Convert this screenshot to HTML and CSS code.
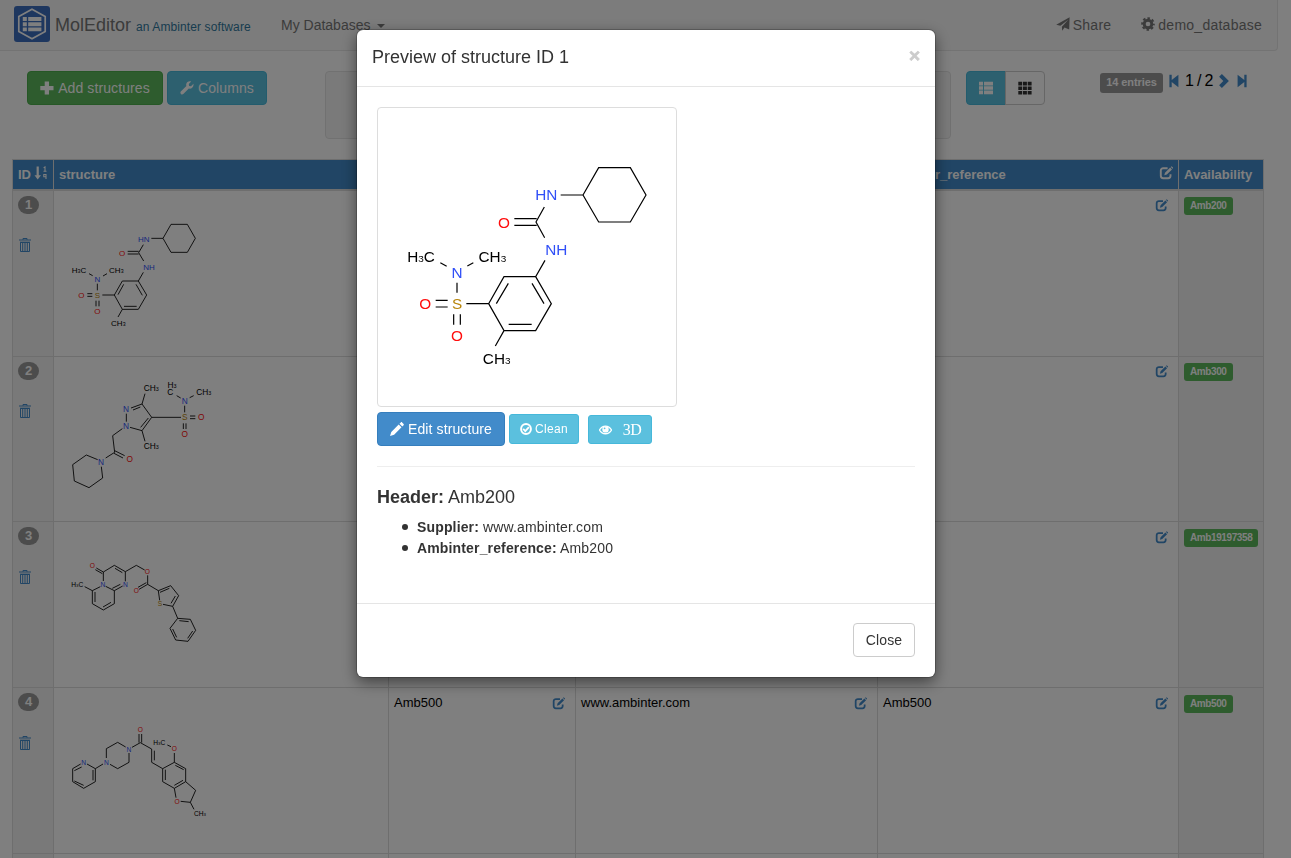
FILE: index.html
```html
<!DOCTYPE html>
<html lang="en">
<head>
<meta charset="utf-8">
<title>MolEditor</title>
<link rel="stylesheet" href="styles.css">
</head>
<body>
<svg class="sprite" aria-hidden="true">
  <symbol id="plus" viewBox="0 0 14 14"><path d="M4.700.500h4.300V5h4.500v4.200H9v4.300H4.700V9.200H.300V5h4.400z"/></symbol>
  <symbol id="wrench" viewBox="0 0 14 14"><path d="M13.500 2.800 11 5.200 9.100 4.900 8.800 3 11.200.600C9-.200 6.600 1 6.200 3.200c-.100.800 0 1.300.200 1.900L.800 10.400c-.600.800-.500 1.800.100 2.500.700.700 1.700.700 2.400.100L8.800 7.600c2.800.600 5.100-1.900 4.700-4.800z"/></symbol>
  <symbol id="plane" viewBox="0 0 14 14"><path d="M13.600.200 13.200 12.600 8.500 10.600 6.200 13.800 5.900 9.700 12.200 2.800 4.400 8.700.200 7.700z"/></symbol>
  <symbol id="cog" viewBox="0 0 14 14"><circle cx="7" cy="7" r="3.800" fill="none" stroke="currentColor" stroke-width="2.900"/><circle cx="7" cy="7" r="5.800" fill="none" stroke="currentColor" stroke-width="2" stroke-dasharray="2.500 2.055" stroke-dashoffset="1.250"/></symbol>
  <symbol id="list" viewBox="0 0 14 14"><path d="M0 .800h4v3.600H0zM5 .800h9v3.600H5zM0 5.200h4v3.600H0zM5 5.200h9v3.600H5zM0 9.600h4v3.600H0zM5 9.600h9v3.600H5z"/></symbol>
  <symbol id="grid" viewBox="0 0 14 14"><path d="M.300.800h3.900v3.600H.300zM5 .800h3.900v3.600H5zM9.700.800h3.900v3.600H9.700zM.300 5.400h3.900V9H.300zM5 5.400h3.900V9H5zM9.700 5.400h3.900V9H9.700zM.300 10h3.900v3.600H.300zM5 10h3.900v3.600H5zM9.700 10h3.900v3.600H9.700z"/></symbol>
  <symbol id="first" viewBox="0 0 10 14"><path d="M.400.700h2.300v5.400L9.400.700v12.600L2.700 7.900v5.400H.400z"/></symbol>
  <symbol id="last" viewBox="0 0 10 14"><path d="M9.600.700H7.300v5.400L.600.700v12.600l6.700-5.400v5.400h2.300z"/></symbol>
  <symbol id="next" viewBox="0 0 10 14"><path d="M2.900 0 9.900 7l-7 7L.100 11.200 4.300 7 .100 2.800z"/></symbol>
  <symbol id="edit" viewBox="0 0 14 14"><path d="M8.600 2.200H4.200C2.800 2.200 1.800 3.200 1.800 4.600v5.200c0 1.400 1 2.400 2.400 2.400h4.900c1.400 0 2.400-1 2.400-2.400V8.200" fill="none" stroke="currentColor" stroke-width="1.900"/><path d="M5.300 9.300 6 6.800 11.200 1.600 13 3.400 7.800 8.600zM11.800 1l.8-.8 1.800 1.800-.8.8z"/></symbol>
  <symbol id="sort" viewBox="0 0 14 14"><path d="M2.600.500h2.200v8.700h2.200L3.700 13.500.500 9.200h2.100z"/><path d="M9.600 1.700 11 1v4.200M9.500 5.200h3M12 13V8.500H9.800v2.200H12" fill="none" stroke="currentColor" stroke-width="1.100"/></symbol>
  <symbol id="trash" viewBox="0 0 12 14"><path d="M0 2h12M4 1.800V.500h4v1.300M1.500 4.500v9h9v-9zM3.700 5v8M6 5v8M8.300 5v8M1 4.200h10" fill="none" stroke="currentColor"/></symbol>
  <symbol id="pencil" viewBox="0 0 14 14"><path d="M0 14 1.300 9.900 8.700 2.500l2.800 2.800-7.400 7.400zM9.500 1.700l1.300-1.300c.4-.4.900-.4 1.300 0l1.500 1.500c.4.400.4.900 0 1.300l-1.300 1.300z"/></symbol>
  <symbol id="check" viewBox="0 0 12 12"><circle cx="6" cy="6" r="4.900" fill="none" stroke="currentColor" stroke-width="2"/><path d="m3.200 5.900 2.100 2.200 3.600-4" fill="none" stroke="currentColor" stroke-width="1.800"/></symbol>
  <symbol id="eye" viewBox="0 0 13 12"><path d="M.500 6C3.500.800 9.500.800 12.500 6 9.500 11 3.500 11 .500 6z" fill="none" stroke="currentColor" stroke-width="1.300"/><circle cx="6.500" cy="5.400" r="3.200"/><circle cx="5.600" cy="4.300" r=".9" fill="#5bc0de"/></symbol>
</svg>

<nav class="navbar">
  <a class="brand">
    <svg class="logo" viewBox="0 0 36 36"><rect width="36" height="36" rx="3" fill="#3d6fbf"/><path d="M18 3.200 31.200 10.500v15L18 32.800 4.800 25.500v-15z" fill="none" stroke="#fff" stroke-width="1.700"/><path d="M8.800 11h4v4h-4zM14.200 11h13.200v4H14.200zM8.800 16.200h4v4h-4zM14.200 16.200h13.200v4H14.200zM8.800 21.400h4v3.800h-4zM14.200 21.400h13.200v3.800H14.200z" fill="#fff"/></svg>
    <span class="brand-name">MolEditor</span><small>an Ambinter software</small>
  </a>
  <a class="nav-link">My Databases <i class="caret"></i></a>
  <div class="nav-right">
    <a class="nav-link spaced"><svg class="ico"><use href="#plane"/></svg>Share</a>
    <a class="nav-link spaced"><svg class="ico"><use href="#cog"/></svg>demo_database</a>
  </div>
</nav>

<div class="toolbar">
  <div class="actions">
    <button class="btn success"><svg class="ico"><use href="#plus"/></svg>Add structures</button>
    <button class="btn info"><svg class="ico"><use href="#wrench"/></svg>Columns</button>
  </div>
  <div class="well"></div>
  <div class="view-toggle">
    <button class="btn info"><svg class="ico"><use href="#list"/></svg></button>
    <button class="btn default"><svg class="ico"><use href="#grid"/></svg></button>
  </div>
  <div class="pager">
    <span class="entries">14 entries</span>
    <svg class="pg"><use href="#first"/></svg><span class="page">1 / 2</span><svg class="pg next"><use href="#next"/></svg><svg class="pg"><use href="#last"/></svg>
  </div>
</div>

<table class="grid">
  <colgroup><col class="c-id"><col class="c-structure"><col class="c-name"><col class="c-supplier"><col class="c-ref"><col class="c-avail"></colgroup>
  <thead><tr>
    <th><div class="cell">ID<svg class="ico"><use href="#sort"/></svg></div></th>
    <th>structure</th>
    <th></th>
    <th></th>
    <th><div class="cell">Ambinter_reference<svg class="ico"><use href="#edit"/></svg></div></th>
    <th>Availability</th>
  </tr></thead>
  <tbody>
    <tr class="raised tall">
      <td class="side"><span class="badge">1</span><svg class="bin"><use href="#trash"/></svg></td>
      <td><svg class="mol" viewBox="177 138 480 450" font-size="24">
        <path d="M489 265 513 223H562L586 265 562 307H513zM454 265H489M430 284 416 308 431 333M416 304H383M416 312H383M430 367 415 393 440 435 415 478H367L343 435 367 393H415M408 403 427 436M371 403 354 434M372 469H410M343 435H307M292 401V421M288 452V469M297 452V469M262 431H277M262 439H277M267 371 278 377M309 378 321 371M367 478 354 501"/>
        <g class="n"><text x="431" y="275">HN</text><text x="447" y="360">NH</text><text x="292" y="396">N</text></g>
        <g class="o"><text x="366" y="317">O</text><text x="244" y="444">O</text><text x="292" y="493">O</text></g><text class="s" x="292" y="444">S</text>
        <text x="237" y="370">H<tspan class="sub">3</tspan>C</text><text x="349" y="370">CH<tspan class="sub">3</tspan></text><text x="355" y="528">CH<tspan class="sub">3</tspan></text>
      </svg></td>
      <td></td>
      <td></td>
      <td><div class="cell end"><svg class="ico"><use href="#edit"/></svg></div></td>
      <td class="side"><span class="label">Amb200</span></td>
    </tr>
    <tr class="raised short">
      <td class="side"><span class="badge">2</span><svg class="bin"><use href="#trash"/></svg></td>
      <td><svg class="mol" viewBox="177 36 480 450" font-size="25">
        <path d="M435 131 426 162 455 202 426 242 435 274M426 162 393 174M421 171 399 180M455 202H543M445 204 422 232M379 191V215M390 232 426 242M367 236 338 257 344 307 317 324M344 302 374 317M342 310 369 324M293 329 259 315 218 344 223 393 267 413 308 384 304 350M554 167V187M550 220V237M558 220V237M570 198H586M570 206H586M530 137 542 144M569 143 581 137"/>
        <g class="n"><text x="378" y="186">N</text><text x="378" y="237">N</text><text x="303" y="344">N</text><text x="554" y="161">N</text></g>
        <g class="o"><text x="389" y="335">O</text><text x="604" y="211">O</text><text x="554" y="261">O</text></g><text class="s" x="554" y="211">S</text>
        <text x="454" y="124">CH<tspan class="sub">3</tspan></text><text x="454" y="298">CH<tspan class="sub">3</tspan></text><text x="611" y="136">CH<tspan class="sub">3</tspan></text><text x="516" y="113">H<tspan class="sub">3</tspan></text><text x="511" y="136">C</text>
      </svg></td>
      <td></td>
      <td></td>
      <td><div class="cell end"><svg class="ico"><use href="#edit"/></svg></div></td>
      <td class="side"><span class="label">Amb300</span></td>
    </tr>
    <tr>
      <td class="side"><span class="badge">3</span><svg class="bin"><use href="#trash"/></svg></td>
      <td><svg class="mol" viewBox="177 21 480 450" font-size="20">
        <path d="M254 200 277 212 301 200M277 212V251L310 270 343 251V212L317 199M285 216V246M309 261 333 247M343 212 368 198M337 205 361 193M310 183V156L343 136 376 155V184M345 145 367 158M310 156 289 144M307 161 286 149M376 155 409 136 434 150M443 166V193L475 212 512 197 536 227 518 259 489 253M443 193 417 208M439 188 414 202M480 217 508 205M526 228 513 250M475 212 479 241M518 259 533 295 571 298 587 331 564 364 527 360 510 325 533 295M538 302 566 305M578 333 563 355M530 352 518 327"/>
        <g class="n"><text x="309" y="201">N</text><text x="376" y="201">N</text></g>
        <g class="o"><text x="277" y="143">O</text><text x="442" y="162">O</text><text x="409" y="220">O</text></g><text class="s" x="480" y="257">S</text>
        <text x="232" y="200">H<tspan class="sub">3</tspan>C</text>
      </svg></td>
      <td></td>
      <td></td>
      <td><div class="cell end"><svg class="ico"><use href="#edit"/></svg></div></td>
      <td class="side"><span class="label">Amb19197358</span></td>
    </tr>
    <tr>
      <td class="side"><span class="badge">4</span><svg class="bin"><use href="#trash"/></svg></td>
      <td><svg class="mol" viewBox="177 24 480 450" font-size="20">
        <path d="M242 237 218 251V290L251 310 286 290V251L261 237M245 246 223 257M223 288 251 301M279 286V255M286 251 309 237M319 219V191L353 172 377 186M387 204V232L353 251 330 238M396 187 421 173 455 192V232L488 251V290L523 310 557 290V251L523 232 488 251M417 173V147M425 173V147M463 197V226M496 254V285M523 301 549 286M526 241 551 254M523 232V204M513 185 502 180M557 290 587 316 571 352 542 349M523 310 528 338M571 352 582 373"/>
        <g class="n"><text x="251" y="239">N</text><text x="319" y="239">N</text><text x="387" y="200">N</text></g>
        <g class="o"><text x="421" y="140">O</text><text x="523" y="199">O</text><text x="531" y="356">O</text></g>
        <text x="478" y="179">H<tspan class="sub">3</tspan>C</text><text x="600" y="393">CH<tspan class="sub">3</tspan></text>
      </svg></td>
      <td><div class="cell">Amb500<svg class="ico"><use href="#edit"/></svg></div></td>
      <td><div class="cell">www.ambinter.com<svg class="ico"><use href="#edit"/></svg></div></td>
      <td><div class="cell">Amb500<svg class="ico"><use href="#edit"/></svg></div></td>
      <td class="side"><span class="label">Amb500</span></td>
    </tr>
    <tr class="partial"><td class="side"></td><td></td><td></td><td></td><td></td><td class="side"></td></tr>
  </tbody>
</table>

<div class="backdrop">
  <section class="modal">
    <header class="modal-head"><h4>Preview of structure ID 1</h4><span class="x">×</span></header>
    <div class="modal-body">
      <div class="frame">
        <svg class="mol large" viewBox="63 24 894 894" font-size="46">
          <path d="M678 285 725 203H820L867 285 820 366H725zM611 285H678M562 321 537 366 563 413M539 356H472M539 376H472M564 481 536 530 583 611 536 692H441L395 611 441 530H536M525 550 561 611M454 550 418 611M455 673H524M395 611H328M300 548V578M290 643V674M310 643V674M236 601H272M236 621H272M250 488 269 499M331 498 349 488M441 692 415 738"/>
          <g class="n"><text x="568" y="301">HN</text><text x="598" y="465">NH</text><text x="300" y="534">N</text></g>
          <g class="o"><text x="441" y="383">O</text><text x="205" y="628">O</text><text x="300" y="722">O</text></g><text class="s" x="300" y="628">S</text>
          <text x="192" y="487">H<tspan class="sub">3</tspan>C</text><text x="406" y="487">CH<tspan class="sub">3</tspan></text><text x="419" y="792">CH<tspan class="sub">3</tspan></text>
        </svg>
      </div>
      <div class="modal-actions">
        <button class="btn primary"><svg class="ico"><use href="#pencil"/></svg>Edit structure</button>
        <button class="btn info small"><svg class="ico"><use href="#check"/></svg>Clean</button>
        <button class="btn info small three-d"><svg class="ico"><use href="#eye"/></svg>3D</button>
      </div>
      <hr>
      <h4><b>Header:</b> Amb200</h4>
      <ul><li><b>Supplier:</b> www.ambinter.com</li><li><b>Ambinter_reference:</b> Amb200</li></ul>
    </div>
    <footer class="modal-foot"><button class="btn default">Close</button></footer>
  </section>
</div>
</body>
</html>
```
FILE: styles.css
```css
* { box-sizing: border-box; }
html, body { height: 858px; overflow: hidden; }
body { margin: 0; background: #fff; color: #333; font: 14px/20px "Liberation Sans", Arial, sans-serif; }
svg { fill: currentColor; flex: none; }
.sprite { position: absolute; width: 0; height: 0; }
.ico { width: 14px; height: 14px; overflow: visible; }

.navbar { display: flex; align-items: center; width: 1278px; height: 51px; padding: 0 15px 2px 14px; background: #f8f8f8; border: 1px solid #e7e7e7; border-width: 0 1px 1px 0; border-radius: 0 0 4px; color: #777; }
.brand { display: flex; align-items: center; width: 267px; font-size: 18px; }
.logo { width: 36px; height: 36px; margin-right: 5px; }
.brand-name { padding-top: 1px; }
.brand small { margin: 6px 0 0 5px; font-size: 12px; letter-spacing: .1px; color: #31789f; }
.nav-link { display: flex; align-items: center; padding-top: 2px; white-space: nowrap; }
.nav-link .ico { margin: -2px 3px 0 0; }
.spaced { letter-spacing: .25px; }
.nav-right { display: flex; gap: 30px; margin-left: auto; }
.caret { margin: 2px 0 0 7px; border: 4px solid transparent; border-top-color: currentColor; border-bottom: 0; }

.toolbar { display: flex; align-items: flex-start; height: 108px; padding: 20px 0 0 27px; }
.actions { display: flex; gap: 4px; width: 298px; }
.btn { display: inline-flex; align-items: center; justify-content: center; gap: 4px; height: 34px; margin: 0; padding: 0 12px; border: 1px solid; border-radius: 4px; font: inherit; letter-spacing: .1px; white-space: nowrap; color: #fff; }
.success { background: #5cb85c; border-color: #4cae4c; }
.info { background: #5bc0de; border-color: #46b8da; }
.primary { background: #428bca; border-color: #357ebd; }
.default { background: #fff; border-color: #ccc; color: #333; }
.actions .success { width: 136px; }
.actions .info { width: 100px; }
.well { width: 626px; height: 68px; background: #f5f5f5; border: 1px solid #e3e3e3; border-radius: 4px; }
.view-toggle { display: flex; margin-left: 15px; }
.view-toggle .btn { width: 40px; padding: 0; }
.view-toggle .info { border-radius: 4px 0 0 4px; }
.view-toggle .default { margin-left: -1px; border-radius: 0 4px 4px 0; }
.pager { display: flex; align-items: center; height: 20px; margin-left: 55px; color: #428bca; }
.entries { width: 63px; height: 20px; margin: 4px 6px 0 0; border-radius: 3px; background: #999; color: #fff; font-size: 11px; font-weight: bold; letter-spacing: -.1px; line-height: 19px; text-align: center; }
.pg { width: 10px; height: 14px; }
.page { width: 28px; margin: 0 6px; font-size: 16px; letter-spacing: -.7px; white-space: nowrap; color: #000; }
.pg.next { margin-right: 8px; }

.grid { width: 1252px; margin-left: 12px; border-collapse: collapse; table-layout: fixed; font-size: 13px; color: #000; }
.c-id { width: 41px; } .c-structure { width: 335px; } .c-name { width: 187px; } .c-supplier { width: 302px; } .c-ref { width: 301px; } .c-avail { width: 85px; }
.grid th, .grid td { padding: 5px; border: 1px solid #ddd; text-align: left; vertical-align: top; }
.grid th { height: 30px; border-bottom-width: 2px; padding-bottom: 0; background: #428bca; color: #fff; line-height: 19px; white-space: nowrap; }
.grid td { height: 166px; }
.grid .tall td { height: 167px; }
.grid .short td { height: 165px; }
.grid .partial td { height: 6px; padding: 0; }
.cell { display: flex; justify-content: space-between; line-height: 20px; }
.cell.end { justify-content: flex-end; }
th .cell { line-height: 19px; }
th .ico { margin-top: 1px; }
td .ico { width: 13px; height: 13px; margin: 4px 5px 0 0; color: #428bca; }
.raised td .ico { margin-top: 3px; }
.grid td.side { background: #f2f2f2; }
.badge { display: block; width: 21px; height: 18px; border-radius: 10px; background: #999; color: #fff; font-size: 13px; font-weight: bold; line-height: 18px; text-align: center; }
.bin { display: block; width: 12px; height: 14px; margin: 25px 0 0 1px; color: #428bca; }
.raised .bin { margin-top: 24px; }
.label { display: block; width: fit-content; height: 18px; margin-top: 2px; padding: 0 6px; border-radius: 3px; background: #5cb85c; color: #fff; font-size: 10px; font-weight: bold; letter-spacing: -.4px; line-height: 18px; }
.raised .label { margin-top: 1px; }

.mol { display: block; width: 160px; height: 150px; text-anchor: middle; fill: #000; }
.mol path { fill: none; stroke: #000; stroke-width: 2.6; }
.mol .n { fill: #304ff7; }
.mol .o { fill: #ff0d0d; }
.mol .s { fill: #b8860b; }
.sub { font-size: .65em; }
.mol.large { width: 298px; height: 298px; }
.mol.large path { stroke-width: 3.6; }

.backdrop { position: fixed; inset: 0; padding: 30px 0 0 357px; background: rgba(0, 0, 0, .5); }
.modal { width: 578px; height: 647px; background: #fff; border-radius: 6px; box-shadow: 0 0 0 1px rgba(0, 0, 0, .2), 0 5px 15px rgba(0, 0, 0, .5); }
.modal h4 { margin: 0; font-size: 18px; font-weight: normal; line-height: 20px; }
.modal-head { display: flex; justify-content: space-between; height: 57px; padding: 17px 15px 0; border-bottom: 1px solid #e5e5e5; }
.x { font-size: 19px; font-weight: bold; line-height: 18px; color: #ccc; -webkit-text-stroke: .7px #ccc; }
.modal-body { height: 516px; padding: 20px; }
.frame { width: 300px; height: 300px; border: 1px solid #ddd; border-radius: 4px; }
.modal-actions { display: flex; align-items: flex-start; padding-top: 5px; }
.modal-actions .primary { width: 128px; }
.small { width: 70px; height: 30px; margin: 2px 0 0 4px; padding: 0 8px; border-radius: 3px; font-size: 12px; letter-spacing: .3px; gap: 3px; }
.small .ico { width: 12px; height: 12px; }
.three-d { width: 64px; height: 29px; margin: 3px 0 0 9px; gap: 11px; font-family: "Liberation Serif", serif; font-size: 16px; letter-spacing: -.5px; }
.three-d .ico { width: 13px; }
.modal hr { height: 1px; margin: 20px 0; border: 0; background: #eee; }
.modal ul { margin: 10px 0 0; padding-left: 40px; line-height: 21px; list-style: none; letter-spacing: .15px; }
.modal li::before { content: ""; display: inline-block; width: 6px; height: 6px; margin: 0 9px 2px -15px; border-radius: 50%; background: #333; }
.modal-foot { display: flex; justify-content: flex-end; padding: 19px 20px; border-top: 1px solid #e5e5e5; }
.modal-foot .btn { width: 62px; }
```
